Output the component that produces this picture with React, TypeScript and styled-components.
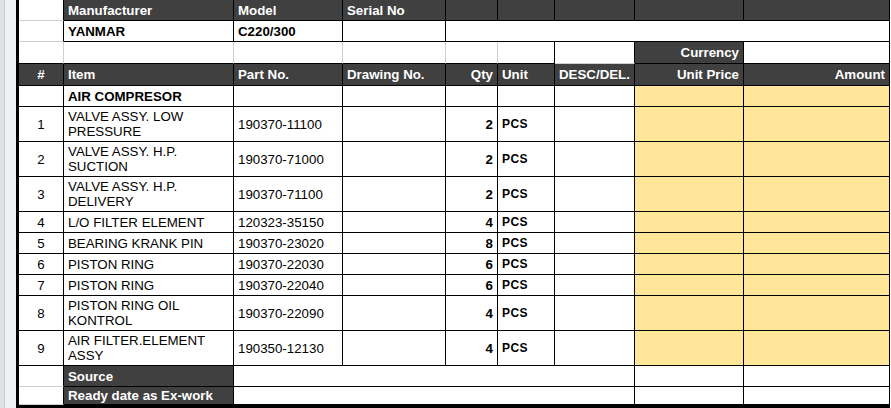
import React from 'react';
import styled, { createGlobalStyle } from 'styled-components';

const INK = '#000';
const GRID = '#d0d0d0';
const DARK = '#404040';
const GOLD = '#ffe699';

const GlobalStyle = createGlobalStyle`
  html, body {
    margin: 0;
    padding: 0;
    background: #fff;
  }
  body {
    font-family: 'Liberation Sans', Arial, sans-serif;
    font-size: 13.3px;
    color: #000;
  }
`;

const Page = styled.div`
  display: flex;
  align-items: flex-start;
  width: 891px;
  height: 408px;
  overflow: hidden;
`;

// window chrome strip on the left of the sheet
const Gutter = styled.div`
  flex: none;
  width: 16px;
  height: 408px;
  background: linear-gradient(to right, #dde2e6 0 4px, #c9cfd4 4px 5px, #eff1f3 5px);
`;

const Sheet = styled.div`
  display: grid;
  grid-template-columns: 45px 170px 109px 103px 52px 57px 80px 109px 146px;
  grid-template-rows:
    21px 21px 22px 22px 21px
    repeat(3, 35px) repeat(4, 21px) repeat(2, 35px)
    21px 18px;
  border-left: 3px solid ${INK};
  border-bottom: 3px solid ${INK};
`;

type Tone = 'plain' | 'dark' | 'gold';
type Align = 'left' | 'center' | 'right';
type Line = 'ink' | 'grid';

const justify = { left: 'flex-start', center: 'center', right: 'flex-end' };

const Cell = styled.div<{
  $tone?: Tone;
  $align?: Align;
  $bold?: boolean;
  $right?: Line;
  $bottom?: Line;
  $span?: number;
}>`
  box-sizing: border-box;
  display: flex;
  align-items: center;
  justify-content: ${(p) => justify[p.$align || 'left']};
  text-align: ${(p) => p.$align || 'left'};
  padding: 0 4px;
  line-height: 15px;
  overflow: hidden;
  grid-column: span ${(p) => p.$span || 1};
  border-right: 1px solid ${(p) => (p.$right === 'grid' ? GRID : INK)};
  border-bottom: 1px solid ${(p) => (p.$bottom === 'grid' ? GRID : INK)};
  background: ${(p) => (p.$tone === 'dark' ? DARK : p.$tone === 'gold' ? GOLD : '#fff')};
  color: ${(p) => (p.$tone === 'dark' ? '#fff' : '#000')};
  font-weight: ${(p) => (p.$bold || p.$tone === 'dark' ? 700 : 400)};
`;

const UnitTag = styled.span`
  font-size: 12px;
  font-weight: 700;
  letter-spacing: 0.4px;
`;

type Part = { no: number; item: string; part: string; qty: number };

const parts: Part[] = [
  { no: 1, item: 'VALVE ASSY. LOW PRESSURE', part: '190370-11100', qty: 2 },
  { no: 2, item: 'VALVE ASSY. H.P. SUCTION', part: '190370-71000', qty: 2 },
  { no: 3, item: 'VALVE ASSY. H.P. DELIVERY', part: '190370-71100', qty: 2 },
  { no: 4, item: 'L/O FILTER ELEMENT', part: '120323-35150', qty: 4 },
  { no: 5, item: 'BEARING KRANK PIN', part: '190370-23020', qty: 8 },
  { no: 6, item: 'PISTON RING', part: '190370-22030', qty: 6 },
  { no: 7, item: 'PISTON RING', part: '190370-22040', qty: 6 },
  { no: 8, item: 'PISTON RING OIL KONTROL', part: '190370-22090', qty: 4 },
  { no: 9, item: 'AIR FILTER.ELEMENT ASSY', part: '190350-12130', qty: 4 },
];

const headings: { label: string; align: Align }[] = [
  { label: '#', align: 'center' },
  { label: 'Item', align: 'left' },
  { label: 'Part No.', align: 'left' },
  { label: 'Drawing No.', align: 'left' },
  { label: 'Qty', align: 'right' },
  { label: 'Unit', align: 'left' },
  { label: 'DESC/DEL.', align: 'left' },
  { label: 'Unit Price', align: 'right' },
  { label: 'Amount', align: 'right' },
];

const FooterRow = ({ label }: { label: string }) => (
  <>
    <Cell $bottom="grid" />
    <Cell $tone="dark">{label}</Cell>
    <Cell $span={5} />
    <Cell />
    <Cell />
  </>
);

export default function App() {
  return (
    <>
      <GlobalStyle />
      <Page>
        <Gutter />
        <Sheet>
          {/* machine info */}
          <Cell $bottom="grid" />
          <Cell $tone="dark">Manufacturer</Cell>
          <Cell $tone="dark">Model</Cell>
          <Cell $tone="dark">Serial No</Cell>
          <Cell $tone="dark" />
          <Cell $tone="dark" />
          <Cell $tone="dark" />
          <Cell $tone="dark" />
          <Cell $tone="dark" />

          <Cell $bottom="grid" />
          <Cell $bold>YANMAR</Cell>
          <Cell $bold>C220/300</Cell>
          <Cell />
          <Cell $span={5} />

          <Cell $right="grid" />
          <Cell $right="grid" />
          <Cell $right="grid" />
          <Cell $right="grid" />
          <Cell $right="grid" />
          <Cell />
          <Cell $bottom="grid" />
          <Cell $tone="dark" $align="right">Currency</Cell>
          <Cell />

          {/* table head */}
          {headings.map((h) => (
            <Cell key={h.label} $tone="dark" $align={h.align}>
              {h.label}
            </Cell>
          ))}

          <Cell />
          <Cell $bold>AIR COMPRESOR</Cell>
          <Cell />
          <Cell />
          <Cell />
          <Cell />
          <Cell />
          <Cell $tone="gold" />
          <Cell $tone="gold" />

          {parts.map((p) => (
            <React.Fragment key={p.no}>
              <Cell $align="center">{p.no}</Cell>
              <Cell>{p.item}</Cell>
              <Cell>{p.part}</Cell>
              <Cell />
              <Cell $align="right" $bold>{p.qty}</Cell>
              <Cell>
                <UnitTag>PCS</UnitTag>
              </Cell>
              <Cell />
              <Cell $tone="gold" />
              <Cell $tone="gold" />
            </React.Fragment>
          ))}

          <FooterRow label="Source" />
          <FooterRow label="Ready date as Ex-work" />
        </Sheet>
      </Page>
    </>
  );
}
